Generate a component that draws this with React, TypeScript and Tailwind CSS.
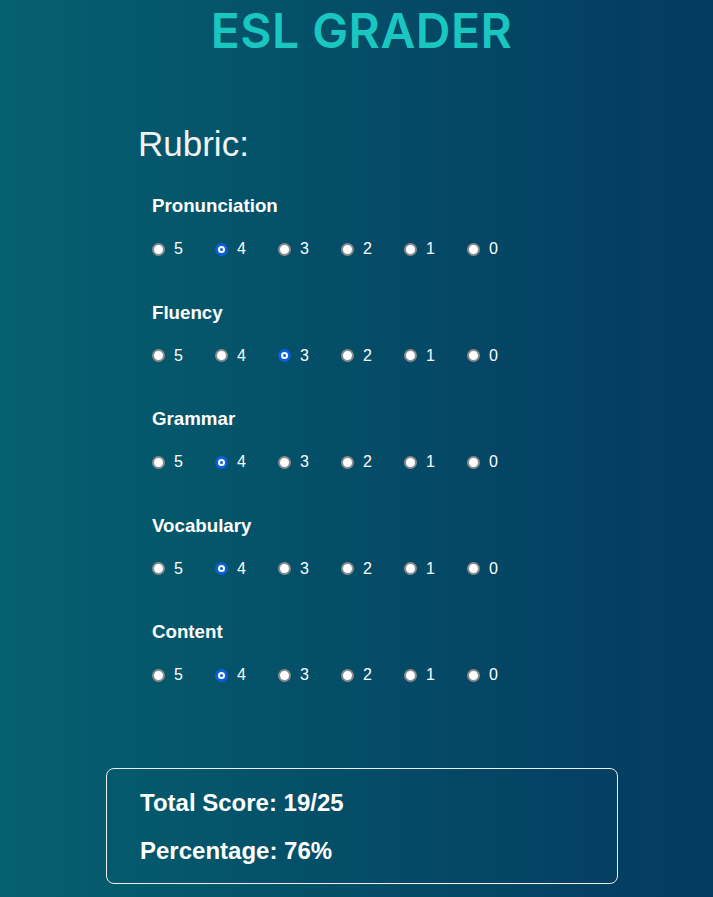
import React from "react";

const groups: { name: string; value: number }[] = [
  { name: "Pronunciation", value: 4 },
  { name: "Fluency", value: 3 },
  { name: "Grammar", value: 4 },
  { name: "Vocabulary", value: 4 },
  { name: "Content", value: 4 },
];

const scores = [5, 4, 3, 2, 1, 0];

function Radio({ checked }: { checked: boolean }) {
  if (checked) {
    return (
      <span className="flex h-[13px] w-[13px] shrink-0 items-center justify-center rounded-full bg-[#0b5fd7]">
        <span className="h-[7px] w-[7px] rounded-full border-2 border-white bg-[#0b5fd7]" />
      </span>
    );
  }
  return <span className="h-[13px] w-[13px] shrink-0 rounded-full border-2 border-[#8c8c8c] bg-white" />;
}

export default function App() {
  return (
    <div
      className="min-h-screen w-full bg-[linear-gradient(to_right,#05606f,#043a60)] text-white"
      style={{ fontFamily: '"Liberation Sans", Arial, sans-serif' }}
    >
      <div className="flex justify-center pl-[10px] pt-[2px]">
        <h1
          className="text-[48px] leading-[58px] font-semibold text-[#19c6c0] tracking-[0.5px]"
          style={{ fontFamily: 'Inter, "Open Sans", sans-serif' }}
        >
          ESL GRADER
        </h1>
      </div>

      <div className="pl-[138px] pt-[64px]">
        <h2 className="text-[35px] leading-[40px] font-normal text-[#f2f2f2]">Rubric:</h2>
        <div className="flex flex-col gap-[42.5px] pl-[14px] pt-[31px]">
          {groups.map((g) => (
            <div key={g.name} className="flex flex-col gap-[22px]">
              <h3 className="text-[18.72px] leading-[22px] font-bold">{g.name}</h3>
              <div className="flex h-[20px] items-center">
                {scores.map((s) => (
                  <label key={s} className="flex w-[63px] items-center gap-[9px] text-[16px] leading-[20px]">
                    <Radio checked={s === g.value} />
                    <span>{s}</span>
                  </label>
                ))}
              </div>
            </div>
          ))}
        </div>
      </div>

      <div className="pl-[106px] pt-[83px]">
        <div className="flex w-[512px] flex-col gap-[20px] rounded-[8px] border border-[#e8eef2] pb-[18px] pl-[33px] pt-[20px]">
          <div className="text-[24px] leading-[28px] font-bold">Total Score: 19/25</div>
          <div className="text-[24px] leading-[28px] font-bold">Percentage: 76%</div>
        </div>
      </div>
    </div>
  );
}
